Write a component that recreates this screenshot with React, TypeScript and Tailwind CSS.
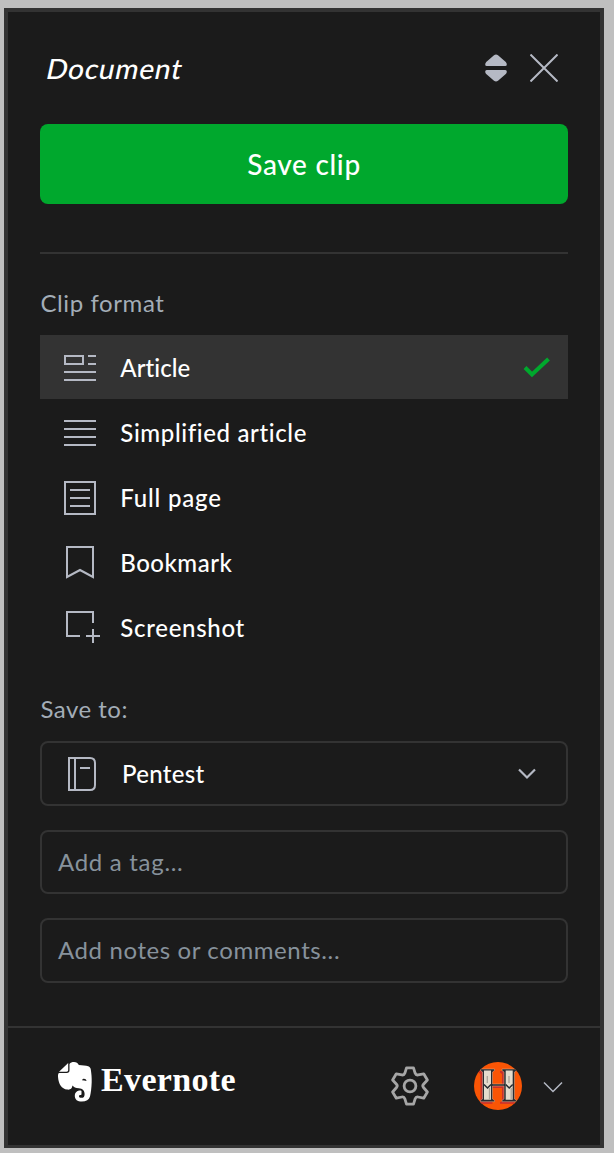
import type { ReactNode } from "react";

const line = { fill: "none", stroke: "#b5b9c4", strokeWidth: 2 } as const;

function ArticleIcon() {
  return (
    <svg width="40" height="40" viewBox="0 0 40 40" {...line}>
      <path d="M5 8h18v8H5zM28 8h8M28 16h8M4 24h32M4 32h32" />
    </svg>
  );
}

function SimplifiedIcon() {
  return (
    <svg width="40" height="40" viewBox="0 0 40 40" {...line}>
      <path d="M4 8h32M4 16h32M4 24h32M4 32h32" />
    </svg>
  );
}

function FullPageIcon() {
  return (
    <svg width="40" height="40" viewBox="0 0 40 40" {...line}>
      <path d="M5 4h30v32H5zM10 12h20M10 20h20M10 28h20" />
    </svg>
  );
}

function BookmarkIcon() {
  return (
    <svg width="40" height="40" viewBox="0 0 40 40" {...line}>
      <path d="M7 4h26v30l-13-7-13 7z" />
    </svg>
  );
}

function ScreenshotIcon() {
  return (
    <svg width="40" height="40" viewBox="0 0 40 40" {...line}>
      <path d="M33 15V4H7v24h13M33 21v14M26 28h14" />
    </svg>
  );
}

function NotebookIcon() {
  return (
    <svg width="30" height="36" viewBox="0 0 30 36" {...line}>
      <path d="M3 2h21q5 0 5 5v22q0 5-5 5H3zM9 2v32M14 12h10" />
    </svg>
  );
}

function Elephant() {
  return (
    <svg width="36" height="42" viewBox="0 0 36 42">
      <path
        fill="#fff"
        d="M12.500 3C13.500 1.600 15 1 17 1c2.200 0 4 1.100 4.800 3 3.500.2 7.200.6 9.400 1.300 1.500.5 2.300 1.500 2.600 3.200.7 4.100 1 8.600.9 12.500-.2 6-.8 11-1.700 14.500-1 3.300-3.800 5.100-8.200 5.100-4.200 0-7-2.200-7-5.700 0-3.600 2.100-5.500 5.900-5.500.5 0 .8.300.8.800v3c0 .5-.3.800-.8.800-1.200 0-1.700.4-1.700 1.300 0 1 .9 1.500 2.500 1.500 2.100 0 3.100-1.400 3.100-3.900 0-3.100-2-5.300-5.800-5.600-3-.2-5.300-1-6.300-2.700-.7 3.400-2.200 4.400-5.400 4C4.700 28 1.500 23.300 1 15.800c-.1-1.700.2-2.900.8-3.800h8c1.800 0 2.700-.9 2.700-2.700z"
      />
      <path fill="#fff" d="M2 10.700 11.200 2v7c0 1.100-.6 1.700-1.700 1.700z" />
      <path fill="#1b1b1b" d="M25 19.300c.5-2.200 4.200-2.100 4.500.8-1.500-.6-3-.7-4.500-.8z" />
    </svg>
  );
}

function GearIcon() {
  return (
    <svg width="40" height="40" viewBox="0 0 40 40" fill="none" stroke="#a6a6a6" strokeWidth="2.800" strokeLinejoin="round">
      <path d="M16.500 1.800h7l1.700 5.500c.5 1.300 1.500 1.900 2.900 1.600l5.600-1.100 3.700 6.200-3.900 4.300c-.9 1-.9 2.200 0 3.200l3.900 4.500-3.700 6.200-5.600-1.200c-1.400-.3-2.400.3-2.900 1.700l-1.700 5.500h-7l-1.700-5.500c-.5-1.400-1.500-2-2.900-1.700l-5.600 1.200-3.700-6.200 3.900-4.500c.9-1 .9-2.200 0-3.200l-3.900-4.300 3.700-6.200 5.600 1.100c1.400.3 2.400-.3 2.900-1.600z" />
      <circle cx="20" cy="20" r="5.900" />
    </svg>
  );
}

function Avatar() {
  const letter =
    "M6.500 7h14v1.500L18.500 10v12H30V10l-2-1.500V7h14.500v1.500l-2 1.500v27l2 1.300v1.400H28v-1.400l2-1.300V24H18.500v13l2 1.300v1.400h-14v-1.400l2-1.300V10l-2-1.500z";
  return (
    <svg width="48" height="48" viewBox="0 0 48 48">
      <defs>
        <clipPath id="disc">
          <circle cx="24" cy="24" r="24" />
        </clipPath>
      </defs>
      <g clipPath="url(#disc)">
        <path fill="#fa5505" d="M0 0h48v48H0z" />
        <path d={letter} transform="translate(-2 2)" fill="#c9302a" />
        <path d={letter} fill="#272c32" stroke="#e0b090" strokeWidth=".5" />
        <path d="M10 8.500h7v29.300h-7zM31.700 8.500h7v29.300h-7z" fill="#e4dccd" />
        <path d="M15.500 26v11.800M37.200 26v11.800M13.300 14v7M35 14v7" stroke="#aaa499" strokeWidth="1.300" />
        <path d="M10 22.500l3.500 3.500 3.500-3.500M31.700 22.500l3.500 3.500 3.500-3.500" fill="none" stroke="#272c32" strokeWidth="1.500" />
      </g>
    </svg>
  );
}

function Option({ icon, children, selected }: { icon: ReactNode; children: ReactNode; selected?: boolean }) {
  return (
    <div className={`flex h-16 items-center pl-5 pr-[17px] ${selected ? "bg-[#333333]" : ""}`}>
      <div className="pt-0.5">{icon}</div>
      <div className="ml-5 flex-1 pl-[0.3px] pt-px">{children}</div>
      {selected && (
        <svg className="mt-px" width="28" height="24" viewBox="0 0 28 24" fill="none" stroke="#00a82d" strokeWidth="4">
          <path d="M2 11.500l7 7L25.500 3" />
        </svg>
      )}
    </div>
  );
}

export default function App() {
  return (
    <div className="h-[1153px] w-[614px] bg-[#bfbfbf] pl-1 pt-2 font-['Lato',sans-serif] text-[24px] leading-8 font-medium text-white">
      <div className="flex h-[1140px] w-[600px] flex-col border-4 border-b-[3px] border-[#333333] bg-[#1b1b1b]">
        <div className="flex flex-col px-8">
          <header className="flex h-28 items-center">
            <h1 className="flex-1 pl-[7px] text-[28px] font-medium"><span className="inline-block -skew-x-12 tracking-[0.75px]">Document</span></h1>
            <svg className="mr-[22px]" width="24" height="28" viewBox="0 0 24 28" fill="#b5b9c4">
              <path d="M2.200 8 10 1.300q2-1.500 4 0L21.800 8q1 1 1 2.500 0 1.500-1.500 1.500H2.700q-1.500 0-1.500-1.500 0-1.500 1-2.500zM2.200 20l7.800 6.700q2 1.500 4 0l7.800-6.700q1-1 1-2.500 0-1.500-1.500-1.500H2.700q-1.500 0-1.500 1.500 0 1.500 1 2.500z" />
            </svg>
            <svg className="mr-2.5" width="28" height="28" viewBox="0 0 28 28" {...line}>
              <path d="M.5.5l27 27M27.500.5l-27 27" />
            </svg>
          </header>
          <button className="flex h-20 items-center justify-center rounded-lg bg-[#00a82d] text-[28px]">
            <span className="tracking-[0.7px]">Save clip</span>
          </button>
          <hr className="mt-12 border-t-2 border-[#333333]" />
          <div className="mt-[33px] h-12 pl-[0.4px] font-normal text-[#a3adb7]"><span className="tracking-[0.6px]">Clip format</span></div>
          <div className="flex flex-col gap-px">
            <Option icon={<ArticleIcon />} selected><span className="tracking-[0.05px]">Article</span></Option>
            <Option icon={<SimplifiedIcon />}><span className="tracking-[0.62px]">Simplified article</span></Option>
            <Option icon={<FullPageIcon />}><span className="tracking-[0.8px]">Full page</span></Option>
            <Option icon={<BookmarkIcon />}><span className="tracking-[0.5px]">Bookmark</span></Option>
            <Option icon={<ScreenshotIcon />}><span className="tracking-[0.7px]">Screenshot</span></Option>
          </div>
          <div className="mt-[34px] h-12 pl-[0.4px] font-normal text-[#a3adb7]"><span className="tracking-[0.5px]">Save to:</span></div>
          <div className="flex h-[65px] items-center rounded-lg border-2 border-[#333333] pl-6 pr-[30.5px]">
            <NotebookIcon />
            <div className="ml-[26px] flex-1"><span className="tracking-[0.3px]">Pentest</span></div>
            <svg width="18" height="12" viewBox="0 0 18 12" fill="none" stroke="#b5b9c4" strokeWidth="2.200">
              <path d="M1 1.500l8 8 8-8" />
            </svg>
          </div>
          <div className="mt-6 flex h-16 items-center rounded-lg border-2 border-[#333333] px-4 font-normal text-[#87929c]">
            <span className="tracking-[0.7px]">Add a tag...</span>
          </div>
          <div className="mt-6 flex h-[65px] items-center rounded-lg border-2 border-[#333333] px-4 pb-px font-normal text-[#87929c]">
            <span className="tracking-[0.6px]">Add notes or comments...</span>
          </div>
        </div>
        <footer className="mt-[43px] flex h-[119px] items-center border-t-2 border-[#333333] pl-[49px] pr-[37px]">
          <div className="mb-2.5 flex items-center">
            <Elephant />
            <div className="ml-2 pb-1 font-['Liberation_Serif',serif] text-[34px] font-bold"><span className="tracking-[0.35px]">Evernote</span></div>
          </div>
          <div className="ml-auto flex items-center pb-0.5">
            <GearIcon />
            <div className="ml-11"><Avatar /></div>
            <svg className="ml-[21px] mt-0.5" width="20" height="12" viewBox="0 0 20 12" fill="none" stroke="#b5b9c4" strokeWidth="1.500">
              <path d="M1 1.500l9 9 9-9" />
            </svg>
          </div>
        </footer>
      </div>
    </div>
  );
}
